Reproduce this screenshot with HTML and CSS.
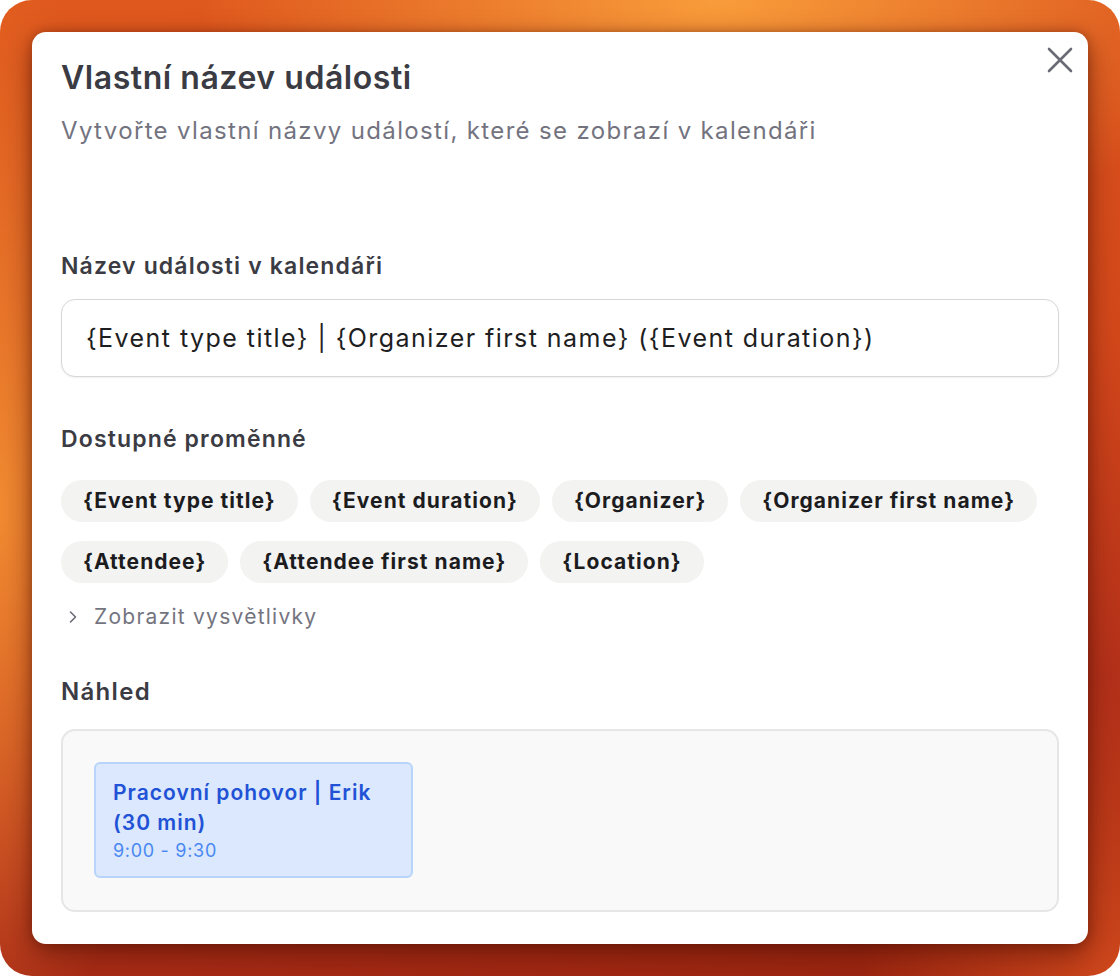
FILE: index.html
```html
<!DOCTYPE html>
<html lang="cs">
<head>
  <meta charset="UTF-8" />
  <meta name="viewport" content="width=device-width, initial-scale=1.0"/>
  <title>Vlastní název události</title>
  <link rel="stylesheet" href="styles.css">
</head>
<body>
  <div class="backdrop">
    <div class="dialog">
      <button class="close-btn" aria-label="Zavřít">
        <svg width="28" height="28" viewBox="0 0 28 28" fill="none" stroke="#6b6b76" stroke-width="2.6" stroke-linecap="round">
          <path d="M3 3 L25 25 M25 3 L3 25"/>
        </svg>
      </button>

      <h1>Vlastní název události</h1>
      <p class="subtitle">Vytvořte vlastní názvy událostí, které se zobrazí v kalendáři</p>

      <label class="label label-first" for="eventName">Název události v kalendáři</label>
      <input type="text" id="eventName" class="name-input" value="{Event type title} | {Organizer first name} ({Event duration})">

      <h2 class="label label-vars">Dostupné proměnné</h2>
      <div class="chips">
        <span class="chip">{Event type title}</span>
        <span class="chip">{Event duration}</span>
        <span class="chip">{Organizer}</span>
        <span class="chip">{Organizer first name}</span>
        <span class="chip">{Attendee}</span>
        <span class="chip">{Attendee first name}</span>
        <span class="chip">{Location}</span>
      </div>

      <div class="toggle">
        <svg width="14" height="14" viewBox="0 0 14 14" fill="none" stroke="#6b6b76" stroke-width="1.6" stroke-linecap="round" stroke-linejoin="round">
          <path d="M4.5 2 L9.5 7 L4.5 12"/>
        </svg>
        <span>Zobrazit vysvětlivky</span>
      </div>

      <h2 class="label label-preview">Náhled</h2>
      <div class="preview">
        <div class="event-card">
          <div class="event-title">Pracovní pohovor | Erik (30 min)</div>
          <div class="event-time">9:00 - 9:30</div>
        </div>
      </div>
    </div>
  </div>
</body>
</html>
```

FILE: styles.css
```css
* {
  box-sizing: border-box;
  margin: 0;
  padding: 0;
  font-family: 'Inter', 'Noto Sans', sans-serif;
}

body {
  background: #fff;
  width: 1120px;
  height: 976px;
  overflow: hidden;
}

.backdrop {
  width: 1120px;
  height: 976px;
  border-radius: 32px;
  padding: 32px;
  background:
    radial-gradient(ellipse 520px 260px at 64% 0%, rgba(250, 160, 60, 0.95), rgba(250, 160, 60, 0) 100%),
    radial-gradient(ellipse 200px 520px at 0% 52%, rgba(244, 146, 52, 0.9), rgba(244, 146, 52, 0) 100%),
    radial-gradient(ellipse 260px 300px at 100% 100%, rgba(214, 76, 30, 0.9), rgba(214, 76, 30, 0) 100%),
    linear-gradient(170deg, #e05a1e 0%, #d3481b 45%, #b3301a 75%, #98240f 100%);
}

.dialog {
  position: relative;
  background: #fff;
  border-radius: 14px;
  height: 912px;
  padding: 28px 29px 32px;
  box-shadow: 0 10px 28px rgba(70, 12, 0, 0.55), 0 0 10px rgba(70, 12, 0, 0.3);
}

.close-btn {
  position: absolute;
  top: 14px;
  right: 14px;
  background: none;
  border: none;
  width: 28px;
  height: 28px;
  cursor: pointer;
}

h1 {
  font-size: 32px;
  line-height: 36px;
  font-weight: 600;
  color: #3b3b44;
  letter-spacing: 0.55px;
}

.subtitle {
  margin-top: 20px;
  font-size: 24px;
  line-height: 30px;
  letter-spacing: 1.35px;
  color: #737380;
}

.label {
  display: block;
  font-size: 23px;
  line-height: 30px;
  font-weight: 600;
  letter-spacing: 1.15px;
  color: #3b3b44;
}

.label-first {
  margin-top: 105px;
}

.name-input {
  display: block;
  width: 100%;
  height: 78px;
  margin-top: 18px;
  padding: 0 24px;
  border: 1.5px solid #d6d6db;
  border-radius: 14px;
  font-size: 25px;
  letter-spacing: 1.45px;
  color: #1e1e22;
  box-shadow: 0 1px 2px rgba(0, 0, 0, 0.06);
  outline: none;
}

.label-vars {
  margin-top: 47px;
}

.chips {
  display: flex;
  flex-wrap: wrap;
  column-gap: 12px;
  row-gap: 19px;
  margin-top: 26px;
}

.chip {
  height: 42px;
  line-height: 42px;
  padding: 0 22px;
  border-radius: 21px;
  background: #f3f3f2;
  font-size: 21px;
  font-weight: 700;
  letter-spacing: 1.05px;
  color: #1c1c1f;
}

.toggle {
  display: flex;
  align-items: center;
  gap: 14px;
  margin-top: 20px;
  padding-left: 5px;
  font-size: 21px;
  line-height: 28px;
  letter-spacing: 1.25px;
  color: #74747f;
}

.label-preview {
  margin-top: 46px;
  font-size: 24px;
  letter-spacing: 1.3px;
}

.preview {
  margin-top: 22px;
  height: 183px;
  padding: 31px;
  background: #f9f9f9;
  border: 2px solid #e6e6e6;
  border-radius: 14px;
}

.event-card {
  width: 319px;
  padding: 14px 17px;
  background: #dbe8fd;
  border: 2px solid #b8d4fb;
  border-radius: 6px;
}

.event-title {
  font-size: 21px;
  line-height: 30px;
  font-weight: 600;
  letter-spacing: 1px;
  color: #2152d6;
}

.event-time {
  margin-top: 2px;
  font-size: 18px;
  line-height: 22px;
  letter-spacing: 0.7px;
  color: #4a88f2;
}
```
